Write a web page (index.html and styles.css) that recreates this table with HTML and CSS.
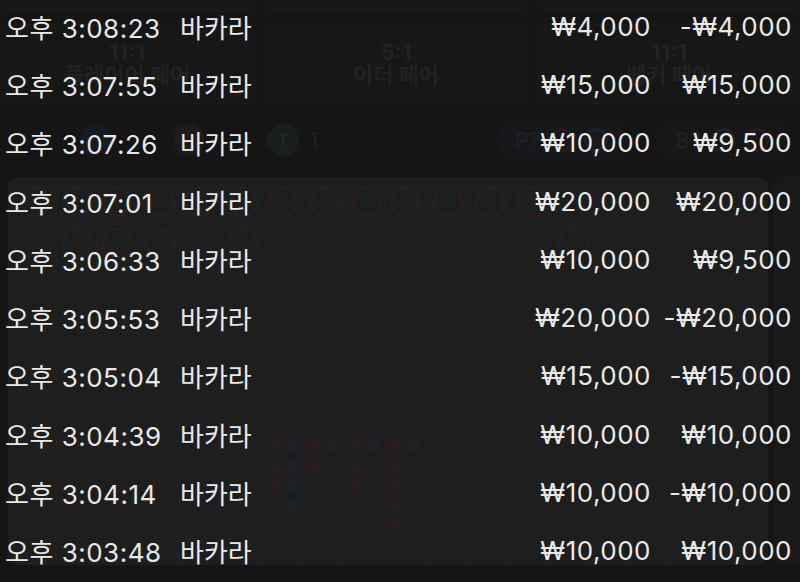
FILE: index.html
```html
<!DOCTYPE html>
<html lang="ko">
<head>
<meta charset="utf-8">
<link rel="stylesheet" href="styles.css">
</head>
<body>
<div class="screen">
  <div class="game">
    <div class="bets-top">
      <div class="bet-box"></div>
      <div class="bet-box"></div>
      <div class="bet-box"></div>
    </div>
    <div class="bets">
      <div class="bet-box"><span class="odds">11:1</span><span class="name">플레이어 페어</span></div>
      <div class="bet-box"><span class="odds">5:1</span><span class="name">이더 페어</span></div>
      <div class="bet-box"><span class="odds">11:1</span><span class="name">뱅커 페어</span></div>
    </div>
    <div class="stats">
      <div class="counts">
        <span class="dot dot-p"></span><span class="num"></span>
        <span class="dot dot-b"></span><span class="num"></span>
        <span class="dot dot-t">T</span><span class="num">1</span>
      </div>
      <div class="asks">
        <div class="ask ask-p"><span>P?</span><i class="ring ring-r"></i><i class="ring ring-b"></i></div>
        <div class="ask ask-b"><span>B?</span><i class="ring ring-b"></i><i class="ring ring-r"></i></div>
      </div>
    </div>
    <div class="board-row">
      <div class="board">
        <svg class="road" width="760" height="388" viewBox="0 0 760 388">
          <g stroke="#222222" stroke-width="1">
            <line x1="48" y1="0" x2="48" y2="388"/><line x1="89" y1="0" x2="89" y2="388"/>
            <line x1="130" y1="0" x2="130" y2="388"/><line x1="171" y1="0" x2="171" y2="388"/>
            <line x1="212" y1="0" x2="212" y2="388"/><line x1="253" y1="0" x2="253" y2="388"/>
            <line x1="294" y1="0" x2="294" y2="388"/><line x1="335" y1="0" x2="335" y2="388"/>
            <line x1="376" y1="0" x2="376" y2="388"/><line x1="417" y1="0" x2="417" y2="388"/>
            <line x1="458" y1="0" x2="458" y2="388"/><line x1="499" y1="0" x2="499" y2="388"/>
            <line x1="540" y1="0" x2="540" y2="388"/><line x1="581" y1="0" x2="581" y2="388"/>
            <line x1="622" y1="0" x2="622" y2="388"/><line x1="663" y1="0" x2="663" y2="388"/>
            <line x1="704" y1="0" x2="704" y2="388"/>
          </g>
          <g fill="none" stroke-width="3">
            <circle cx="27" cy="25" r="14" stroke="#2b1e1f"/>
            <circle cx="69" cy="25" r="14" stroke="#1e232a"/>
            <circle cx="109" cy="25" r="14" stroke="#2b1e1f"/>
            <circle cx="152" cy="25" r="14" stroke="#1e232a"/>
            <circle cx="192" cy="25" r="14" stroke="#2b1e1f"/>
            <circle cx="235" cy="25" r="14" stroke="#1e232a"/>
            <circle cx="275" cy="25" r="14" stroke="#2b1e1f"/>
            <circle cx="317" cy="25" r="14" stroke="#1e232a"/>
            <circle cx="359" cy="25" r="14" stroke="#2b1e1f"/>
            <circle cx="397" cy="25" r="14" stroke="#1e232a"/>
            <circle cx="440" cy="25" r="14" stroke="#2b1e1f"/>
            <circle cx="482" cy="25" r="14" stroke="#1e232a"/>
            <circle cx="524" cy="25" r="14" stroke="#2b1e1f"/>
            <circle cx="69" cy="66" r="14" stroke="#1e232a"/>
            <circle cx="109" cy="66" r="14" stroke="#2b1e1f"/>
            <circle cx="152" cy="66" r="14" stroke="#1e232a"/>
            <circle cx="235" cy="66" r="14" stroke="#1e232a"/>
            <circle cx="565" cy="66" r="14" stroke="#1e232a"/>
          </g>
          <g fill="none" stroke-width="2">
            <circle cx="14" cy="268" r="7" stroke="#261f1f"/>
            <circle cx="35" cy="268" r="7" stroke="#1f2228"/>
            <circle cx="56" cy="268" r="7" stroke="#261f1f"/>
            <circle cx="77" cy="268" r="7" stroke="#1f2228"/>
            <circle cx="98" cy="268" r="7" stroke="#261f1f"/>
            <circle cx="119" cy="268" r="7" stroke="#1f2228"/>
            <circle cx="140" cy="268" r="7" stroke="#261f1f"/>
            <circle cx="161" cy="268" r="7" stroke="#1f2228"/>
            <circle cx="35" cy="288" r="7" stroke="#1f2228"/>
            <circle cx="56" cy="288" r="7" stroke="#261f1f"/>
            <circle cx="77" cy="288" r="7" stroke="#1f2228"/>
            <circle cx="98" cy="288" r="7" stroke="#261f1f"/>
            <circle cx="119" cy="288" r="7" stroke="#1f2228"/>
            <circle cx="140" cy="288" r="7" stroke="#261f1f"/>
            <circle cx="56" cy="308" r="7" stroke="#261f1f"/>
            <circle cx="140" cy="308" r="7" stroke="#261f1f"/>
            <circle cx="56" cy="328" r="7" stroke="#261f1f"/>
            <circle cx="98" cy="328" r="7" stroke="#261f1f"/>
            <circle cx="119" cy="328" r="7" stroke="#1f2228"/>
            <circle cx="140" cy="328" r="7" stroke="#261f1f"/>
            <circle cx="140" cy="348" r="7" stroke="#261f1f"/>
          </g>
          <g>
            <circle cx="266" cy="268" r="7" fill="#281d1e"/>
            <circle cx="286" cy="268" r="7" fill="#1d2229"/>
            <circle cx="306" cy="268" r="7" fill="#281d1e"/>
            <circle cx="326" cy="268" r="7" fill="#1d2229"/>
            <circle cx="346" cy="268" r="7" fill="#281d1e"/>
            <circle cx="366" cy="268" r="7" fill="#1d2229"/>
            <circle cx="386" cy="268" r="7" fill="#281d1e"/>
            <circle cx="406" cy="268" r="7" fill="#1d2229"/>
            <circle cx="266" cy="288" r="7" fill="#281d1e"/>
            <circle cx="286" cy="288" r="7" fill="#1d2229"/>
            <circle cx="306" cy="288" r="7" fill="#281d1e"/>
            <circle cx="346" cy="288" r="7" fill="#281d1e"/>
            <circle cx="386" cy="288" r="7" fill="#281d1e"/>
            <circle cx="266" cy="308" r="7" fill="#281d1e"/>
            <circle cx="286" cy="308" r="7" fill="#1d2229"/>
            <circle cx="346" cy="308" r="7" fill="#281d1e"/>
            <circle cx="386" cy="308" r="7" fill="#281d1e"/>
            <circle cx="286" cy="328" r="7" fill="#1d2229"/>
            <circle cx="386" cy="328" r="7" fill="#281d1e"/>
            <circle cx="386" cy="348" r="7" fill="#281d1e"/>
          </g>
          <g stroke-width="2">
            <line x1="507" y1="277" x2="519" y2="262" stroke="#271e1e"/>
            <line x1="527" y1="277" x2="539" y2="262" stroke="#1e2228"/>
            <line x1="547" y1="277" x2="559" y2="262" stroke="#271e1e"/>
            <line x1="567" y1="277" x2="579" y2="262" stroke="#1e2228"/>
            <line x1="637" y1="277" x2="649" y2="262" stroke="#271e1e"/>
            <line x1="507" y1="297" x2="519" y2="282" stroke="#271e1e"/>
            <line x1="527" y1="297" x2="539" y2="282" stroke="#1e2228"/>
            <line x1="547" y1="297" x2="559" y2="282" stroke="#271e1e"/>
            <line x1="637" y1="297" x2="649" y2="282" stroke="#271e1e"/>
            <line x1="527" y1="317" x2="539" y2="302" stroke="#1e2228"/>
            <line x1="637" y1="317" x2="649" y2="302" stroke="#271e1e"/>
            <line x1="527" y1="337" x2="539" y2="322" stroke="#1e2228"/>
          </g>
        </svg>
      </div>
      <div class="side"></div>
    </div>
  </div>

  <div class="history">
    <div class="row"><span class="time">오후 3:08:23</span><span class="game-name">바카라</span><span class="bet">₩4,000</span><span class="win">-₩4,000</span></div>
    <div class="row"><span class="time">오후 3:07:55</span><span class="game-name">바카라</span><span class="bet">₩15,000</span><span class="win">₩15,000</span></div>
    <div class="row"><span class="time">오후 3:07:26</span><span class="game-name">바카라</span><span class="bet">₩10,000</span><span class="win">₩9,500</span></div>
    <div class="row"><span class="time">오후 3:07:01</span><span class="game-name">바카라</span><span class="bet">₩20,000</span><span class="win">₩20,000</span></div>
    <div class="row"><span class="time">오후 3:06:33</span><span class="game-name">바카라</span><span class="bet">₩10,000</span><span class="win">₩9,500</span></div>
    <div class="row"><span class="time">오후 3:05:53</span><span class="game-name">바카라</span><span class="bet">₩20,000</span><span class="win">-₩20,000</span></div>
    <div class="row"><span class="time">오후 3:05:04</span><span class="game-name">바카라</span><span class="bet">₩15,000</span><span class="win">-₩15,000</span></div>
    <div class="row"><span class="time">오후 3:04:39</span><span class="game-name">바카라</span><span class="bet">₩10,000</span><span class="win">₩10,000</span></div>
    <div class="row"><span class="time">오후 3:04:14</span><span class="game-name">바카라</span><span class="bet">₩10,000</span><span class="win">-₩10,000</span></div>
    <div class="row"><span class="time">오후 3:03:48</span><span class="game-name">바카라</span><span class="bet">₩10,000</span><span class="win">₩10,000</span></div>
  </div>
</div>
</body>
</html>
```

FILE: styles.css
```css
* { box-sizing: border-box; }
html, body { margin: 0; padding: 0; }
body {
  background: #151515;
  font-family: Inter, "Noto Sans CJK KR", sans-serif;
  overflow: hidden;
}
.screen {
  position: relative;
  width: 800px;
  height: 582px;
  overflow: hidden;
  background: #151515;
}

/* faint game layer underneath */
.game {
  display: flex;
  flex-direction: column;
  height: 100%;
}
.bets-top {
  display: grid;
  grid-template-columns: 255px 264px 1fr;
  gap: 9px;
  height: 13px;
  margin-top: -2px;
}
.bets-top .bet-box {
  border: 1px solid #1b1b1b;
  border-top: none;
  border-radius: 0 0 6px 6px;
  background: #171717;
}
.bets {
  display: grid;
  grid-template-columns: 255px 264px 1fr;
  gap: 9px;
  height: 80px;
  margin-top: 13px;
}
.bet-box {
  border: 1px solid #1d1a1a;
  border-radius: 6px;
  background: #171717;
  display: flex;
  flex-direction: column;
  align-items: center;
  justify-content: center;
  color: #222222;
  font-weight: 700;
  line-height: 1.05;
}
.bets .bet-box:first-child { border-left: none; border-radius: 0 6px 6px 0; }
.bets .bet-box:last-child { border-right: none; border-radius: 6px 0 0 6px; }
.odds { font-size: 22px; }
.name { font-size: 22px; }

.stats {
  display: flex;
  justify-content: space-between;
  align-items: center;
  height: 72px;
  padding: 0 12px 0 79px;
}
.counts { display: flex; align-items: center; gap: 10px; }
.dot {
  width: 32px; height: 32px; border-radius: 50%;
  display: flex; align-items: center; justify-content: center;
  font-size: 16px; font-weight: 700; color: #1d1d1d;
}
.dot-p { background: #181c22; }
.dot-b { background: #221a1a; }
.dot-t { background: #19201c; color: #252826; }
.num { font-size: 22px; color: #202020; width: 42px; }
.asks { display: flex; gap: 30px; }
.ask {
  display: flex; align-items: center; gap: 10px;
  height: 40px; padding: 0 18px; border-radius: 20px;
  background: #17181b; font-size: 22px; color: #222222;
}
.ask-b { background: #181616; border: 1px solid #211919; }
.ring { display: block; width: 24px; height: 24px; border-radius: 50%; border: 3px solid; }
.ring-r { border-color: #271b1b; }
.ring-b { border-color: #1b2129; }

.board-row {
  display: flex;
  gap: 6px;
  margin: 1px 0 0 8px;
  height: 388px;
}
.board {
  flex: 0 0 760px;
  background: #1e1e1e;
  border-radius: 10px;
  overflow: hidden;
}
.side {
  flex: 1;
  background: #191919;
  border-radius: 8px 0 0 8px;
}
.road { display: block; }

/* overlay history list */
.history {
  position: absolute;
  inset: 0;
  margin-top: -3px;
  padding: 0 8px 0 5px;
  color: #e9e9e9;
  font-size: 26px;
  letter-spacing: 0.5px;
  font-weight: 400;
}
.row {
  display: grid;
  grid-template-columns: 175px 1fr auto 141px;
  align-items: center;
  height: 58.3px;
  white-space: nowrap;
}
.game-name { font-family: "Noto Sans CJK KR", sans-serif; letter-spacing: 0; }
.bet, .win { text-align: right; }
```
